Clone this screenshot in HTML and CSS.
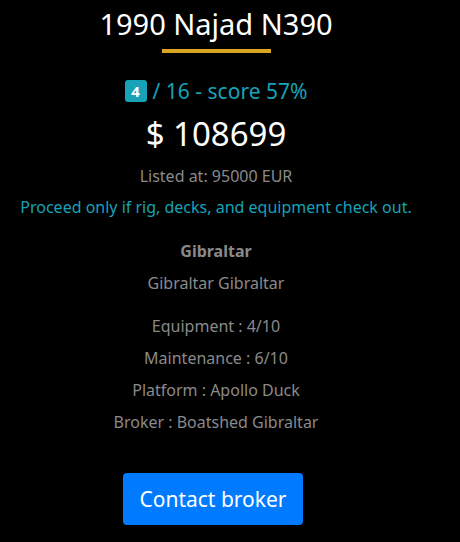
FILE: index.html
```html
<!DOCTYPE html>
<html>
<head>
<meta charset="utf-8">
<link rel="stylesheet" href="styles.css">
</head>
<body>
<div class="card">
  <h1 class="title">1990 Najad N390</h1>
  <div class="rule"></div>
  <div class="score"><span class="badge">4</span> / 16 - score 57%</div>
  <div class="price">$ 108699</div>
  <div class="muted listed">Listed at: 95000 EUR</div>
  <div class="advice">Proceed only if rig, decks, and equipment check out.</div>
  <div class="muted loc-strong">Gibraltar</div>
  <div class="muted loc">Gibraltar Gibraltar</div>
  <div class="details">
    <div class="muted row">Equipment : 4/10</div>
    <div class="muted row">Maintenance : 6/10</div>
    <div class="muted row">Platform : Apollo Duck</div>
    <div class="muted row">Broker : Boatshed Gibraltar</div>
  </div>
  <button class="btn">Contact broker</button>
</div>
</body>
</html>
```
FILE: styles.css
```css
html, body {
  margin: 0;
  padding: 0;
  background: #000;
}
body {
  font-family: "Noto Sans", "Open Sans", sans-serif;
  width: 460px;
  height: 542px;
  overflow: hidden;
}
.card {
  width: 402px;
  padding: 0 15px;
  display: flex;
  flex-direction: column;
  align-items: center;
  text-align: center;
}
.title {
  margin: 4px 0 0;
  font-size: 29px;
  font-weight: 400;
  line-height: 40px;
  color: #fff;
}
.rule {
  width: 109px;
  height: 4px;
  background: #daa520;
  margin-top: 5px;
}
.score {
  margin-top: 26px;
  font-size: 21px;
  line-height: 24px;
  color: #17a2b8;
  display: flex;
  align-items: center;
  gap: 6px;
}
.badge {
  display: inline-flex;
  align-items: center;
  justify-content: center;
  width: 22px;
  height: 22px;
  background: #17a2b8;
  color: #fff;
  font-weight: 700;
  font-size: 15px;
  border-radius: 3px;
}
.price {
  margin-top: 8px;
  font-size: 33px;
  line-height: 46px;
  color: #fff;
}
.muted {
  color: #8a8a8a;
  font-size: 16px;
}
.listed {
  margin-top: 8px;
  line-height: 22px;
}
.advice {
  margin-top: 9px;
  font-size: 16px;
  line-height: 22px;
  color: #17a2b8;
}
.loc-strong {
  margin-top: 22px;
  font-weight: 700;
  line-height: 22px;
}
.loc {
  margin-top: 10px;
  line-height: 22px;
}
.details {
  margin-top: 21px;
  display: flex;
  flex-direction: column;
  gap: 10px;
}
.row {
  line-height: 22px;
}
.btn {
  margin-top: 40px;
  margin-right: 6px;
  width: 180px;
  height: 52px;
  border: 0;
  border-radius: 4px;
  background: #007bff;
  color: #fff;
  font-family: inherit;
  font-size: 21px;
}
```
